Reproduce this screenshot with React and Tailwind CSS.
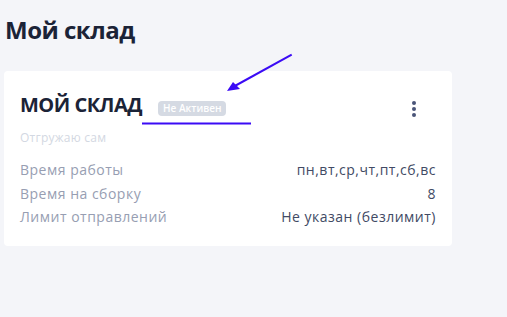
import React from "react";

const rows = [
    { label: "Время работы", value: "пн,вт,ср,чт,пт,сб,вс" },
    { label: "Время на сборку", value: "8" },
    { label: "Лимит отправлений", value: "Не указан (безлимит)" },
];

export default function App() {
    return (
        <main className="relative min-h-screen bg-[#f4f5f9] px-1 pt-[14px] font-['Open_Sans',sans-serif]">
            <h1 className="pl-px text-[24px] leading-8 font-bold tracking-[-0.5px] text-[#1b2337]">
                Мой склад
            </h1>

            <div className="mt-[25px] w-[448px] rounded-[4px] bg-white pt-5 pl-4 pr-4 pb-[17px]">
                <div className="flex items-start justify-between">
                    <div className="flex items-baseline gap-4">
                        <h2 className="text-[20px] leading-7 font-bold tracking-[-0.5px] text-[#1b2337]">
                            МОЙ СКЛАД
                        </h2>
                        <span className="rounded-[4px] bg-[#d5dae3] px-[5px] text-[10px] leading-[15px] font-semibold text-white">
                            Не Активен
                        </span>
                    </div>
                    {/* kebab */}
                    <div className="mt-[10px] mr-5 flex flex-col gap-[2px]">
                        <span className="h-1 w-1 rounded-full bg-[#4a5478]"></span>
                        <span className="h-1 w-1 rounded-full bg-[#4a5478]"></span>
                        <span className="h-1 w-1 rounded-full bg-[#4a5478]"></span>
                    </div>
                </div>

                <p className="mt-[11px] text-[12px] leading-4 tracking-[0.25px] text-[#d3d8e2]">
                    Отгружаю сам
                </p>

                <div className="mt-3">
                    {rows.map((r) => (
                        <div
                            key={r.label}
                            className="flex justify-between text-[14px] leading-[23.5px] tracking-[0.5px]"
                        >
                            <span className="text-[#979eb2]">{r.label}</span>
                            <span className="text-[#414a64]">{r.value}</span>
                        </div>
                    ))}
                </div>
            </div>

            {/* annotation overlay */}
            <svg
                className="pointer-events-none absolute inset-0"
                width="507"
                height="317"
                viewBox="0 0 507 317"
            >
                <line x1="291.7" y1="54.7" x2="233" y2="87" stroke="#3b0bf5" strokeWidth="2" />
                <polygon points="227,91 233,82 240,89" fill="#3b0bf5" />
                <rect x="142" y="122.5" width="109" height="2" fill="#3b0bf5" />
            </svg>
        </main>
    );
}
